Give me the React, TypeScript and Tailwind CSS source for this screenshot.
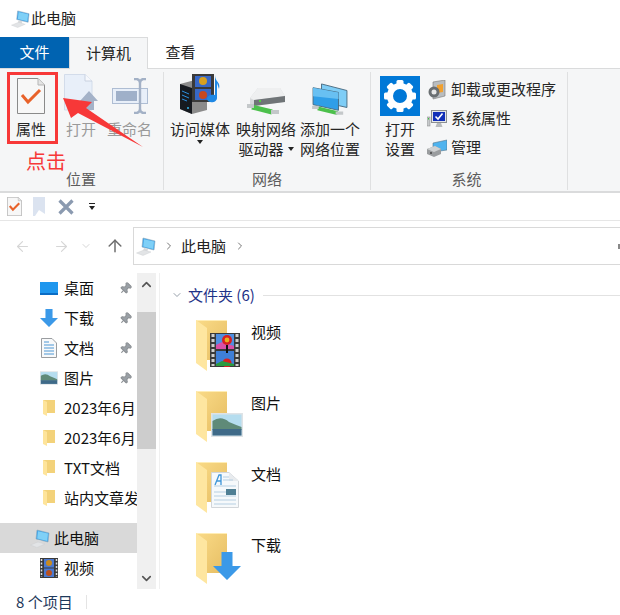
import { ArrowLeft, ArrowRight, ArrowUp, ChevronDown, ChevronRight, ChevronUp, Pin } from 'lucide-react';
import type { ReactNode } from 'react';

function PcIcon({ size = 20 }: { size?: number }) {
  return (
    <svg width={size} height={size} viewBox="0 0 20 20">
      <path d="M7 2 L19 5 L18 14 L6 11 Z" fill="#3aa0e8" stroke="#8fa9bb" strokeWidth="0.6" />
      <path d="M8 3.2 L18 5.6 L17.2 13 L7.2 10.4 Z" fill="#7fd0f7" />
      <path d="M8 12 L12 13 L11 16 L7 15 Z" fill="#d8dadc" />
      <path d="M0.5 17 L8 14 L15 16 L7 19.5 Z" fill="#e2e4e6" stroke="#c9cdd0" strokeWidth="0.4" />
    </svg>
  );
}

function PropsIcon({ small = false }: { small?: boolean }) {
  return (
    <svg width={small ? 15 : 28} height={small ? 19 : 36} viewBox="0 0 28 36">
      <path d="M0.5 0.5 H21 L27.5 7 V35.5 H0.5 Z" fill="#f7f7f7" stroke="#8a8a8a" />
      <path d="M21 0.5 V7 H27.5" fill="#e4e4e4" stroke="#b5b5b5" />
      <path d="M5 17 L11 24 L23 12" fill="none" stroke="#e8622a" strokeWidth={small ? 4 : 3} />
    </svg>
  );
}

function OpenIcon() {
  return (
    <svg width="34" height="40" viewBox="0 0 34 40">
      <path d="M0.5 0.5 H21 L28 7 V36 H0.5 Z" fill="#e8eff9" stroke="#d3dcea" />
      <path d="M21 0.5 V7 H28" fill="#f6f8fc" stroke="#c8d1e0" />
      <path d="M25 17 L34 27 H30 V36 H20 V27 H16 Z" fill="#a4b2c8" />
    </svg>
  );
}

function RenameIcon() {
  return (
    <svg width="36" height="36" viewBox="0 0 36 36">
      <rect x="0.5" y="10.5" width="35" height="15" fill="#e8eff9" stroke="#aebdd3" />
      <rect x="4" y="13" width="21" height="10" fill="#9fb0c9" />
      <path d="M22 1 H25 Q28 2 28 5 V31 Q28 34 31 35 H34 M34 1 H31 Q28 2 28 5 M28 31 Q28 34 25 35 H22" fill="none" stroke="#a3b1c6" strokeWidth="2.4" />
    </svg>
  );
}

function MediaIcon() {
  return (
    <svg width="42" height="40" viewBox="0 0 42 40">
      <path d="M1 10 L16 6 L28 10 V36 L13 40 L1 35 Z" fill="#8b8b8b" />
      <path d="M1 10 L13 14 V40 L1 35 Z" fill="#161a20" />
      <path d="M3 17 L10 20 M3 21 L10 24 M3 25 L8 27" stroke="#2a8fe0" strokeWidth="1" />
      <circle cx="9" cy="34" r="1" fill="#35b5e8" />
      <rect x="13" y="0" width="22" height="28" fill="#3a3a3a" />
      <rect x="16" y="2" width="16" height="11" fill="#3768c8" />
      <rect x="16" y="15" width="16" height="11" fill="#3768c8" />
      <circle cx="24" cy="7" r="4" fill="#d8a020" />
      <circle cx="24" cy="21" r="4" fill="#c84820" />
      <path d="M36 1 C36 8 42 8 40 15 L38 9 V24 C38 29 29 30 28 25 C28 21 33 20 36 21 Z" fill="#1e88e5" />
    </svg>
  );
}

function DriveIcon() {
  return (
    <svg width="40" height="28" viewBox="0 0 40 28">
      <path d="M4 11 L12 1 H34 L39 9 V15 L8 19 L4 17 Z" fill="#d6d8da" />
      <path d="M4 11 L12 1 H34 L39 9 L8 13 Z" fill="#eeeff0" />
      <path d="M8 13 L39 9 V15 L8 19 Z" fill="#6f7477" />
      <rect x="13" y="13" width="2" height="2" fill="#50d040" />
      <path d="M6 20 L26 25" stroke="#4cc04c" strokeWidth="5" />
      <path d="M1 19 H8 M25 25 H33" stroke="#c4c8ca" strokeWidth="4" />
    </svg>
  );
}

function NetPlaceIcon() {
  return (
    <svg width="36" height="32" viewBox="0 0 38 34">
      <path d="M10 1 L37 8 V26 L10 20 Z" fill="#7ecdf6" stroke="#4a6b80" />
      <path d="M1 5 L28 10 V29 L1 23 Z" fill="#2f9ee8" stroke="#4a6b80" />
      <path d="M1 5 L28 10 V17 L1 14 Z" fill="#68c0f2" />
      <path d="M6 27 L27 32" stroke="#4cc04c" strokeWidth="4" />
      <path d="M0 26 H7 M25 32 H33" stroke="#c4c8ca" strokeWidth="3.5" />
    </svg>
  );
}

function GearIcon() {
  return (
    <div className="mb-[-2px] flex h-10 w-10 items-center justify-center bg-[#0078d7]">
      <svg width="32" height="32" viewBox="0 0 32 32">
        <g fill="#fff">
          {[0, 45, 90, 135, 180, 225, 270, 315].map(a => (
            <rect key={a} x="12.5" y="0" width="7" height="7" rx="1.5" transform={`rotate(${a} 16 16)`} />
          ))}
        </g>
        <circle cx="16" cy="16" r="10" fill="none" stroke="#fff" strokeWidth="6" />
      </svg>
    </div>
  );
}

function UninstallIcon() {
  return (
    <svg width="18" height="20" viewBox="0 0 18 20">
      <path d="M5 2 L17 0 V16 L5 19 Z" fill="#b9bdc0" stroke="#777" strokeWidth="0.6" />
      <path d="M9 5 L15 4 V12 L9 13 Z" fill="#f0a030" />
      <circle cx="6" cy="12" r="5.5" fill="#6a6f72" />
      <circle cx="6" cy="12" r="2.5" fill="#e8e8e8" />
    </svg>
  );
}

function SysPropsIcon() {
  return (
    <svg width="20" height="18" viewBox="0 0 20 18">
      <rect x="0" y="7" width="3" height="9" fill="#c6c9cb" stroke="#858585" strokeWidth="0.5" />
      <rect x="1" y="8" width="1" height="1.5" fill="#3cc83c" />
      <rect x="4.5" y="0.5" width="15" height="12" fill="#e4e6e8" stroke="#8b8f92" />
      <rect x="6" y="2" width="12" height="9" fill="#1230b8" />
      <path d="M8.5 6.5 L11 9 L15.5 3.5" fill="none" stroke="#fff" strokeWidth="1.6" />
      <path d="M10 13 H14 L15.5 17 H8.5 Z" fill="#b8bbbd" />
    </svg>
  );
}

function ManageIcon() {
  return (
    <svg width="20" height="18" viewBox="0 0 20 18">
      <path d="M6 4 L20 1 V11 L6 13 Z" fill="#4fb3ee" stroke="#55768c" strokeWidth="0.6" />
      <path d="M0 10 L8 7 L14 10 V15 L7 18 L0 15 Z" fill="#9a9d9f" />
      <path d="M0 10 L8 7 L14 10 L7 13 Z" fill="#cfd1d2" />
      <circle cx="4" cy="14" r="1" fill="#444" />
    </svg>
  );
}

function Caret() {
  return <div className="h-0 w-0 border-x-[3.5px] border-t-[4px] border-x-transparent border-t-[#222]" />;
}

function LargeButton({ icon, lines, caret, disabled, width }: { icon: ReactNode; lines: ReactNode[]; caret?: boolean; disabled?: boolean; width: string }) {
  return (
    <div className={`flex flex-col items-center ${width}`}>
      <div className="flex h-[42px] w-full items-end justify-center">{icon}</div>
      <div className={`mt-[5px] flex flex-col items-center whitespace-nowrap text-center leading-[20px] ${disabled ? 'text-[#9a9a9a]' : 'text-[#262626]'}`}>
        {lines.map((l, i) => (
          <div key={i}>{l}</div>
        ))}
        {caret && <div className="mt-[1px]"><Caret /></div>}
      </div>
    </div>
  );
}

function RibbonGroup({ label, width, children, last, labelClass = '' }: { label: string; width: string; children: ReactNode; last?: boolean; labelClass?: string }) {
  return (
    <div className={`flex h-[118px] flex-col ${width} ${last ? '' : 'border-r border-[#dfe0e1]'}`}>
      <div className="flex flex-1 items-start">{children}</div>
      <div className={`mb-[1px] h-[20px] text-center leading-[20px] text-[#5c5c5c] ${labelClass}`}>{label}</div>
    </div>
  );
}

function SmallFolder() {
  return (
    <svg width="13" height="18" viewBox="0 0 13 18">
      <path d="M0 1 H12 V14 H0 Z" fill="#f3d27a" />
      <path d="M0 1 L4 3 V17 L0 15 Z" fill="#fee49b" />
    </svg>
  );
}

function SmallVideo() {
  return (
    <svg width="18" height="20" viewBox="0 0 18 20">
      <rect width="18" height="20" fill="#3a3a3a" />
      <rect x="4" y="1" width="10" height="8.5" fill="#4a78d0" />
      <rect x="4" y="10.5" width="10" height="8.5" fill="#4a78d0" />
      <circle cx="9" cy="5" r="3" fill="#c88a20" />
      <circle cx="9" cy="15" r="3" fill="#b85020" />
      <path d="M1.5 1 V19 M16.5 1 V19" stroke="#ddd" strokeWidth="1.5" strokeDasharray="2 1.5" />
    </svg>
  );
}

function PhotoThumb({ width, height }: { width: number; height: number }) {
  return (
    <svg width={width} height={height} viewBox="0 0 32 24">
      <rect width="32" height="24" fill="#dfe3e6" />
      <rect x="1.5" y="1.5" width="29" height="21" fill="#b5ddef" />
      <path d="M1.5 8 Q10 2 18 9 Q25 12 30.5 14 V17 H1.5 Z" fill="#5f8a78" />
      <rect x="1.5" y="16" width="29" height="6.5" fill="#3f6a88" />
    </svg>
  );
}

function SmallDoc() {
  return (
    <svg width="16" height="20" viewBox="0 0 16 20">
      <path d="M0.5 0.5 H11 L15.5 5 V19.5 H0.5 Z" fill="#f8f9fa" stroke="#9a9da0" />
      <path d="M3 4 H8 M3 7 H13 M3 10 H13 M3 13 H13 M3 16 H13" stroke="#4d98d4" strokeWidth="1.1" />
    </svg>
  );
}

function DownArrow({ size }: { size: number }) {
  return (
    <svg width={size} height={size} viewBox="0 0 28 28">
      <path d="M8.5 0 H19.5 V14 H28 L14 28 L0 14 H8.5 Z" fill="#3b99e8" />
    </svg>
  );
}

function VideoOverlay() {
  return (
    <svg width="30" height="34" viewBox="0 0 30 34">
      <rect width="30" height="34" fill="#3a3a3a" />
      <rect x="6" y="1" width="18" height="15" fill="#4f8fe0" />
      <rect x="6" y="18" width="18" height="15" fill="#3f7fd8" />
      <path d="M6 12 L12 9 L24 13 V16 H6 Z" fill="#d84fa8" />
      <circle cx="17" cy="7" r="5" fill="#d82020" />
      <circle cx="17" cy="7" r="2.4" fill="#e8b020" />
      <path d="M17 12 V20" stroke="#111" strokeWidth="2" />
      <circle cx="17" cy="30" r="4.5" fill="#d82020" />
      <path d="M6 31 L12 28 L24 31 V33 H6 Z" fill="#2a9a40" />
      <path d="M3 1 V33 M27 1 V33" stroke="#cfcfcf" strokeWidth="3" strokeDasharray="3 2" />
    </svg>
  );
}

function DocOverlay() {
  return (
    <svg width="28" height="36" viewBox="0 0 28 36">
      <path d="M0.5 0.5 H18 L27.5 9 V35.5 H0.5 Z" fill="#f6f9fb" stroke="#d2d6da" />
      <path d="M18 0.5 V9 H27.5 Z" fill="#e8ebee" />
      <path d="M4 13 L8 3 H10 L10 13 M6 9 H10" fill="none" stroke="#3f96d8" strokeWidth="1.3" />
      <path d="M12 5 H18 M12 8 H22 M3 14 H25 M3 20 H15 M3 24 H25 M3 28 H25 M3 32 H25" stroke="#b6cfe2" strokeWidth="1" />
      <rect x="15" y="17" width="10" height="6" fill="#4f7f94" />
    </svg>
  );
}

function BigFolder({ overlay }: { overlay: ReactNode }) {
  return (
    <div className="relative h-[52px] w-[46px] shrink-0">
      <svg width="32" height="52" viewBox="0 0 32 52">
        <defs>
          <linearGradient id="back" x1="0" y1="0" x2="1" y2="1">
            <stop offset="0" stopColor="#fadb88" />
            <stop offset="1" stopColor="#e6bd62" />
          </linearGradient>
        </defs>
        <path d="M0 0 H31 V40 H0 Z" fill="url(#back)" />
        <path d="M0 0 H31 V1 H0 Z" fill="#ffedb5" />
        <path d="M0 0 L11 8 V51 L0 43 Z" fill="#fee6a0" />
      </svg>
      <div className="absolute bottom-[5px] left-[14px]">{overlay}</div>
    </div>
  );
}

const navItems: { icon: ReactNode; label: string; pinned?: boolean }[] = [
  { icon: <div className="h-[13px] w-[18px] border-b-2 border-[#0a6cc4] bg-[#1f97ee]" />, label: '桌面', pinned: true },
  { icon: <DownArrow size={18} />, label: '下载', pinned: true },
  { icon: <SmallDoc />, label: '文档', pinned: true },
  { icon: <PhotoThumb width={18} height={14} />, label: '图片', pinned: true },
  { icon: <SmallFolder />, label: '2023年6月' },
  { icon: <SmallFolder />, label: '2023年6月' },
  { icon: <SmallFolder />, label: 'TXT文档' },
  { icon: <SmallFolder />, label: '站内文章发' },
];

const folders = [
  { label: '视频', overlay: <VideoOverlay /> },
  { label: '图片', overlay: <div className="mb-[1px] ml-[1px]"><PhotoThumb width={32} height={24} /></div> },
  { label: '文档', overlay: <div className="mb-[1px] ml-[1px]"><DocOverlay /></div> },
  { label: '下载', overlay: <div className="ml-[3px]"><DownArrow size={28} /></div> },
];

export default function App() {
  return (
    <div className="relative flex h-[615px] w-[620px] flex-col overflow-hidden bg-white text-[15px] font-['Noto_Sans_CJK_SC','Noto_Sans',sans-serif] text-[#111]">
      {/* Title bar */}
      <div className="flex h-[37px] items-center pl-[11px]">
        <PcIcon size={19} />
        <span className="ml-[1px] text-[#222]">此电脑</span>
      </div>

      {/* Tabs */}
      <div className="flex h-[32px] border-b border-[#dadbdc] text-[#262626]">
        <div className="flex w-[69px] items-center justify-center bg-[#0063b1] text-white">文件</div>
        <div className="mb-[-1px] flex w-[79px] items-center justify-center border-x border-t border-[#dadbdc] bg-[#f5f6f7]">计算机</div>
        <div className="flex w-[64px] items-center justify-center pl-[1px]">查看</div>
      </div>

      {/* Ribbon */}
      <div className="flex h-[124px] border-b-2 border-[#dadbdc] bg-[#f5f6f7] pt-[3px]">
        <RibbonGroup label="位置" width="w-[164px]" labelClass="pr-[1px]">
          <div className="ml-[8px] flex">
            <LargeButton width="w-[46px]" icon={<PropsIcon />} lines={['属性']} />
            <LargeButton width="w-[42px] ml-[6px]" disabled icon={<OpenIcon />} lines={['打开']} />
            <LargeButton width="w-[49px] ml-[3px]" disabled icon={<RenameIcon />} lines={['重命名']} />
          </div>
        </RibbonGroup>
        <RibbonGroup label="网络" width="w-[207px]">
          <div className="ml-[6px] flex">
            <LargeButton width="w-[60px]" icon={<MediaIcon />} lines={['访问媒体']} caret />
            <LargeButton
              width="w-[60px] ml-[6px]"
              icon={<div className="mb-[-1px]"><DriveIcon /></div>}
              lines={['映射网络', <span key="d" className="flex items-center">驱动器<span className="ml-[4px]"><Caret /></span></span>]}
            />
            <LargeButton width="w-[60px] ml-[4px]" icon={<div className="mb-[-1px]"><NetPlaceIcon /></div>} lines={['添加一个', '网络位置']} />
          </div>
        </RibbonGroup>
        <RibbonGroup label="系统" width="w-[197px]" labelClass="pr-[5px]">
          <div className="ml-[9px] flex">
            <LargeButton width="w-[40px]" icon={<GearIcon />} lines={['打开', '设置']} />
            <div className="ml-[7px] mt-[3px] flex flex-col text-[#262626]">
              {[
                { icon: <UninstallIcon />, label: '卸载或更改程序' },
                { icon: <SysPropsIcon />, label: '系统属性' },
                { icon: <ManageIcon />, label: '管理' },
              ].map(row => (
                <div key={row.label} className="flex h-[29px] items-center gap-[4px] whitespace-nowrap">
                  <div className="flex w-[20px] justify-center">{row.icon}</div>
                  {row.label}
                </div>
              ))}
            </div>
          </div>
        </RibbonGroup>
        <div className="flex-1" />
      </div>

      {/* Quick access toolbar */}
      <div className="flex h-[28px] items-center border-b border-[#e6e6e6] pl-[7px]">
        <PropsIcon small />
        <svg className="ml-[11px]" width="13" height="19" viewBox="0 0 13 19">
          <path d="M0 0 H12 V17 L6 13 L2 19 H0 Z" fill="#dbe3f0" />
        </svg>
        <svg className="ml-[12px]" width="16" height="16" viewBox="0 0 16 16">
          <path d="M1.5 1.5 L14.5 14.5 M14.5 1.5 L1.5 14.5" stroke="#8b9ab0" strokeWidth="3.2" />
        </svg>
        <div className="ml-[15px] flex flex-col items-center gap-[2px]">
          <div className="h-[1px] w-[6px] bg-[#222]" />
          <Caret />
        </div>
      </div>

      {/* Address bar */}
      <div className="flex h-[45px] items-end pb-[1px]">
        <div className="flex h-[38px] w-[133px] shrink-0 items-center text-[#d6d6d6]">
          <ArrowLeft className="ml-[14px]" size={17} strokeWidth={1.6} />
          <ArrowRight className="ml-[22px]" size={17} strokeWidth={1.6} />
          <ChevronDown className="ml-[10px]" size={12} strokeWidth={2} />
          <ArrowUp className="ml-[13px] text-[#6e6e6e]" size={20} strokeWidth={1.8} />
        </div>
        <div className="flex h-[38px] flex-1 items-center border-y border-l border-[#d9d9d9] pl-[2px] text-[#222]">
          <PcIcon size={20} />
          <ChevronRight className="ml-[7px] text-[#777]" size={12} strokeWidth={2} />
          <span className="ml-[6px]">此电脑</span>
          <ChevronRight className="ml-[8px] text-[#777]" size={12} strokeWidth={2} />
          <div className="ml-auto h-[5px] w-[2px] bg-[#888]" />
        </div>
      </div>

      {/* Body */}
      <div className="flex h-[323px] pt-[7px]">
        {/* Navigation pane */}
        <div className="w-[137px] shrink-0 overflow-hidden">
          {navItems.map((item, i) => (
            <div key={i} className="flex h-[30px] items-center pl-[40px]">
              <div className="flex w-[18px] shrink-0 justify-center">{item.icon}</div>
              <span className={`ml-[6px] whitespace-nowrap leading-[30px] ${item.pinned ? 'w-[52px]' : 'w-[73px]'}`}>{item.label}</span>
              {item.pinned && <Pin className="ml-[3px] shrink-0 rotate-45 fill-[#9aa0a6] text-[#8b8f93]" size={13} />}
            </div>
          ))}
          <div className="mt-[10px] flex h-[30px] items-center bg-[#d9d9d9] pl-[30px]">
            <PcIcon size={20} />
            <span className="ml-[4px]">此电脑</span>
          </div>
          <div className="flex h-[30px] items-center pl-[40px]">
            <SmallVideo />
            <span className="ml-[6px]">视频</span>
          </div>
        </div>

        {/* Scrollbar */}
        <div className="flex w-[19px] shrink-0 flex-col bg-[#f0f0f0]">
          <div className="flex h-[39px] items-start justify-center pt-[4px]">
            <ChevronUp className="text-[#555]" size={15} strokeWidth={2.6} />
          </div>
          <div className="h-[137px] bg-[#cdcdcd]" />
          <div className="flex flex-1 items-end justify-center pb-[3px]">
            <ChevronDown className="text-[#555]" size={15} strokeWidth={2.6} />
          </div>
        </div>

        {/* Files */}
        <div className="ml-[3px] min-w-0 flex-1 border-l border-[#f0f0f0] pt-[7px]">
          <div className="flex h-[30px] items-center pl-[11px]">
            <ChevronDown className="text-[#7b8794]" size={12} strokeWidth={1.6} />
            <span className="ml-[5px] whitespace-nowrap text-[#1e3287]">文件夹 (6)</span>
            <div className="ml-[8px] h-[1px] flex-1 bg-[#e2e2e2]" />
          </div>
          <div className="flex flex-col pl-[36px] pt-[10px]">
            {folders.map(f => (
              <div key={f.label} className="flex h-[71px] items-start">
                <BigFolder overlay={f.overlay} />
                <span className="ml-[9px] mt-[1px] leading-[22px]">{f.label}</span>
              </div>
            ))}
          </div>
        </div>
      </div>

      {/* Status bar */}
      <div className="flex h-[26px] items-center pl-[16px] text-[#1e395b]">
        <span className="w-[70px]">8 个项目</span>
        <div className="h-[14px] w-[1px] bg-[#e4e4e4]" />
      </div>

      {/* Red annotation */}
      <div className="absolute left-[7px] top-[72px] h-[72px] w-[51px] border-[3px] border-[#f73838]" />
      <svg className="absolute left-0 top-0" width="160" height="160" viewBox="0 0 160 160">
        <polygon points="63,98 92,102 86,108 143,147 78,113 71,118" fill="#f73838" />
      </svg>
      <div className="absolute left-[26px] top-[147px] text-[20px] leading-[28px] text-[#f73838]">点击</div>
    </div>
  );
}
